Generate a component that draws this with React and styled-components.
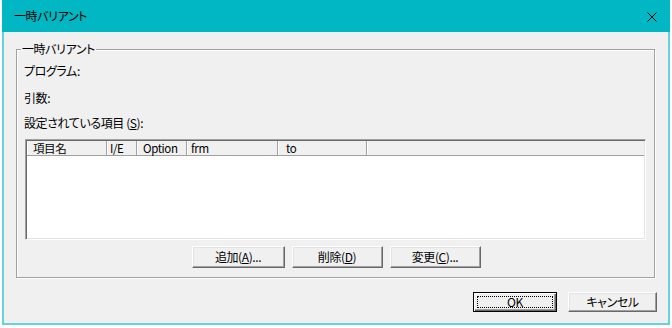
import React from "react";
import styled, { createGlobalStyle } from "styled-components";

const GlobalStyle = createGlobalStyle`
  body {
    margin: 0;
    background: #ffffff;
    font-family: "Noto Sans CJK JP", "Noto Sans", sans-serif;
    font-size: 12px;
    font-feature-settings: "palt";
    letter-spacing: -0.4px;
    color: #000;
  }
`;

const Window = styled.div`
  width: 668px;
  margin-left: 2px;
  display: flex;
  flex-direction: column;
`;

const TitleBar = styled.div`
  height: 32px;
  background: #00b7c3;
  display: flex;
  align-items: center;
  justify-content: space-between;
  padding: 0 13px 0 12px;
`;

const Title = styled.div`
  font-size: 12px;
  line-height: 14px;
`;

const CloseIcon = styled.svg`
  width: 10px;
  height: 10px;
  margin-top: 2px;
`;

const Body = styled.div`
  background: #f0f0f0;
  border: 2px solid #63d2da;
  border-top: none;
  padding: 10px 11px 11px 12px;
  display: flex;
  flex-direction: column;
`;

const GroupBox = styled.fieldset`
  margin: 0 2px 0 0;
  padding: 0;
  min-inline-size: 0;
  border: 1px solid #a0a0a0;
  box-shadow: inset 1px 1px 0 #fff, 1px 1px 0 #fff;
`;

const Legend = styled.legend`
  margin-left: 4px;
  padding: 0 1px;
  line-height: 14px;
  background: #f0f0f0;
`;

const GroupContent = styled.div`
  padding: 0 8px 9px 7px;
  display: flex;
  flex-direction: column;
`;

const FieldLabel = styled.div`
  line-height: 14px;
  margin-top: ${(p) => p.$top}px;
`;

const ListView = styled.div`
  margin-top: 9px;
  margin-left: 1px;
  height: 101px;
  box-sizing: border-box;
  background: #fff;
  border: 1px solid;
  border-color: #a0a0a0 #fff #fff #a0a0a0;
  box-shadow: inset 1px 1px 0 #696969, inset -1px -1px 0 #e3e3e3;
  padding: 1px;
`;

const HeaderRow = styled.div`
  display: flex;
  height: 14px;
  background: #f0f0f0;
  border-bottom: 1px solid #a0a0a0;
`;

const HeaderCell = styled.div`
  width: ${(p) => p.$w}px;
  box-sizing: border-box;
  padding-left: ${(p) => p.$pad}px;
  line-height: 14px;
  font-size: 11.5px;
  border-right: 1px solid #a0a0a0;
  box-shadow: inset 1px 0 0 #fff;
  white-space: nowrap;
`;

const HeaderFiller = styled.div`
  flex: 1;
  box-shadow: inset 1px 0 0 #fff;
`;

const ButtonRow = styled.div`
  margin-top: 6px;
  display: flex;
  justify-content: center;
  gap: 7px;
  padding-left: 2px;
`;

const Button = styled.button`
  position: relative;
  width: ${(p) => p.$w}px;
  height: ${(p) => p.$h}px;
  padding: 0;
  font: inherit;
  font-size: 12px;
  letter-spacing: -0.4px;
  color: #000;
  background: #f0f0f0;
  border: 1px solid;
  border-color: #fff #696969 #696969 #fff;
  box-shadow: inset -1px -1px 0 #a0a0a0, inset 1px 1px 0 #e3e3e3;
  line-height: 14px;
`;

const DefaultButton = styled(Button)`
  border: 1px solid #000;
  box-shadow: inset 1px 1px 0 #fff, inset -1px -1px 0 #696969,
    inset -2px -2px 0 #a0a0a0;

  &::after {
    content: "";
    position: absolute;
    inset: 3px;
    border: 1px dotted #000;
  }
`;

const Footer = styled.div`
  margin-top: 14px;
  display: flex;
  justify-content: flex-end;
  gap: 11px;
`;

const columns = [
  { label: "項目名", w: 80, pad: 6 },
  { label: "I/E", w: 30, pad: 3 },
  { label: "Option", w: 50, pad: 6 },
  { label: "frm", w: 91, pad: 4 },
  { label: "to", w: 89, pad: 8 },
];

export default function App() {
  return (
    <>
      <GlobalStyle />
      <Window>
        <TitleBar>
          <Title>一時バリアント</Title>
          <CloseIcon viewBox="0 0 10 10">
            <path d="M0.5 0.5 L9.5 9.5 M9.5 0.5 L0.5 9.5" stroke="#000" strokeWidth="1" fill="none" />
          </CloseIcon>
        </TitleBar>
        <Body>
          <GroupBox>
            <Legend>一時バリアント</Legend>
            <GroupContent>
              <FieldLabel $top={8}>プログラム:</FieldLabel>
              <FieldLabel $top={13}>引数:</FieldLabel>
              <FieldLabel $top={11}>
                設定されている項目 (<u>S</u>):
              </FieldLabel>
              <ListView>
                <HeaderRow>
                  {columns.map((c) => (
                    <HeaderCell key={c.label} $w={c.w} $pad={c.pad}>
                      {c.label}
                    </HeaderCell>
                  ))}
                  <HeaderFiller />
                </HeaderRow>
              </ListView>
              <ButtonRow>
                <Button $w={93} $h={22}>
                  追加(<u>A</u>)...
                </Button>
                <Button $w={91} $h={22}>
                  削除(<u>D</u>)
                </Button>
                <Button $w={91} $h={22}>
                  変更(<u>C</u>)...
                </Button>
              </ButtonRow>
            </GroupContent>
          </GroupBox>
          <Footer>
            <DefaultButton $w={84} $h={20}>OK</DefaultButton>
            <Button $w={89} $h={20}>キャンセル</Button>
          </Footer>
        </Body>
      </Window>
    </>
  );
}
